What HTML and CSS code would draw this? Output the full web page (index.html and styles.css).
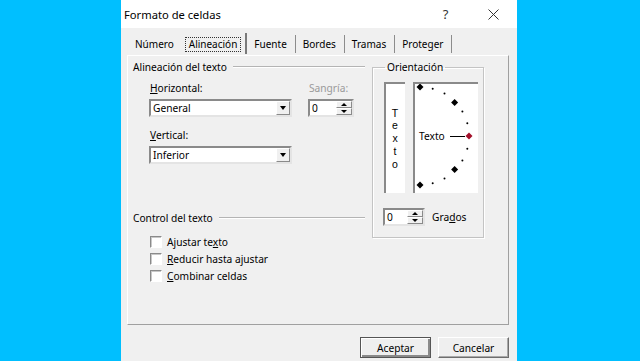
FILE: index.html
```html
<!DOCTYPE html>
<html lang="es">
<head>
  <meta charset="UTF-8" />
  <title>Formato de celdas</title>
  <link rel="stylesheet" href="styles.css">
</head>
<body>
  <div class="dialog">
    <div class="titlebar">
      <span class="title">Formato de celdas</span>
      <span class="cap-btn">?</span>
      <span class="cap-btn">
        <svg width="11" height="11" viewBox="0 0 11 11"><path d="M0.5 0.5 L10.5 10.5 M10.5 0.5 L0.5 10.5" stroke="#333" stroke-width="1" fill="none"/></svg>
      </span>
    </div>

    <div class="tabs">
      <span class="tab first">Número</span>
      <span class="tab active"><span class="focus">Alineación</span></span>
      <span class="tab">Fuente</span>
      <span class="tab">Bordes</span>
      <span class="tab">Tramas</span>
      <span class="tab">Proteger</span>
    </div>

    <div class="panel">
      <div class="col-left">
        <div class="group-head"><span>Alineación del texto</span><i class="rule"></i></div>

        <div class="field-row">
          <div class="field">
            <label><u>H</u>orizontal:</label>
            <div class="combo">General<span class="drop"></span></div>
          </div>
          <div class="field">
            <label class="disabled">Sangría:</label>
            <div class="spin">0<span class="spin-btns"><b class="up"></b><b class="down"></b></span></div>
          </div>
        </div>

        <div class="field vertical">
          <label><u>V</u>ertical:</label>
          <div class="combo">Inferior<span class="drop"></span></div>
        </div>

        <div class="group-head control"><span>Control del texto</span><i class="rule"></i></div>

        <div class="checks">
          <div class="check"><span class="box"></span><span>Ajustar te<u>x</u>to</span></div>
          <div class="check"><span class="box"></span><span><u>R</u>educir hasta ajustar</span></div>
          <div class="check"><span class="box"></span><span><u>C</u>ombinar celdas</span></div>
        </div>
      </div>

      <fieldset class="orient">
        <legend>Orientación</legend>
        <div class="orient-boxes">
          <div class="vtext">
            <span>T</span><span>e</span><span>x</span><span>t</span><span>o</span>
          </div>
          <div class="dial">
            <svg width="62" height="108" viewBox="0 0 62 108">
              <g fill="#000">
                <polygon points="5,-0.5 8.5,3 5,6.5 1.5,3"/>
                <polygon points="39.6,14.9 43.1,18.4 39.6,21.9 36.1,18.4"/>
                <polygon points="39.6,82.1 43.1,85.6 39.6,89.1 36.1,85.6"/>
                <polygon points="5,97.5 8.5,101 5,104.5 1.5,101"/>
                <circle cx="17.7" cy="4.7" r="1"/>
                <circle cx="29.5" cy="9.6" r="1"/>
                <circle cx="47.4" cy="27.5" r="1"/>
                <circle cx="52.3" cy="39.3" r="1"/>
                <circle cx="52.3" cy="64.7" r="1"/>
                <circle cx="47.4" cy="76.5" r="1"/>
                <circle cx="29.5" cy="94.4" r="1"/>
                <circle cx="17.7" cy="99.3" r="1"/>
              </g>
              <text x="4" y="56" font-family="Noto Sans, Liberation Sans, sans-serif" font-size="10.2" fill="#000">Texto</text>
              <line x1="35" y1="52.5" x2="50" y2="52.5" stroke="#000" stroke-width="1"/>
              <polygon points="54,48.5 57.5,52 54,55.5 50.5,52" fill="#a3102a"/>
            </svg>
          </div>
        </div>
        <div class="degrees">
          <div class="spin small">0<span class="spin-btns"><b class="up"></b><b class="down"></b></span></div>
          <span>Gra<u>d</u>os</span>
        </div>
      </fieldset>
    </div>

    <div class="footer">
      <button class="btn default">Aceptar</button>
      <button class="btn">Cancelar</button>
    </div>
  </div>
</body>
</html>
```

FILE: styles.css
```css
* {
  box-sizing: border-box;
}
body {
  margin: 0;
  height: 361px;
  overflow: hidden;
  background: #00bfff;
  font-family: "Noto Sans", "Liberation Sans", sans-serif;
  font-size: 10.2px;
  color: #000;
}
u {
  text-decoration-thickness: 1px;
  text-underline-offset: 1px;
}

.dialog {
  margin-left: 121px;
  width: 396px;
  height: 361px;
  background: #f0f0f0;
  display: flex;
  flex-direction: column;
}

/* title bar */
.titlebar {
  height: 28px;
  background: #fff;
  display: flex;
  align-items: center;
  padding-left: 3px;
  font-size: 11.2px;
}
.title {
  flex: 1;
}
.cap-btn {
  width: 46px;
  height: 28px;
  display: flex;
  align-items: center;
  justify-content: center;
  color: #333;
  font-size: 13px;
}
.cap-btn:nth-child(2) {
  padding-right: 3px;
}
.cap-btn:last-child {
  margin-right: 1px;
}

/* tabs */
.tabs {
  display: flex;
  height: 21px;
  margin: 5px 0 0 6px;
  font-size: 10px;
}
.tab {
  display: flex;
  align-items: center;
  padding: 0 8px 0 7px;
  border-right: 1px solid #8c8c8c;
  margin: 2px 0 1px;
}
.tab.first {
  padding: 0 7px 0 8px;
  border-right: none;
}
.tab.active {
  padding: 0 4px;
  margin: 0;
  border-right: 2px solid #7a7a7a;
}
.focus {
  border: 1px dotted #333;
  padding: 0 3px;
  line-height: 13px;
  margin-top: 1px;
}

/* panel */
.panel {
  margin: 1px 0 0 6px;
  width: 382px;
  height: 270px;
  border: 1px solid;
  border-color: #fff #a0a0a0 #a0a0a0 #fff;
  padding: 5px 0 0 5px;
  display: flex;
  gap: 7px;
}
.col-left {
  width: 232px;
  display: flex;
  flex-direction: column;
}
.group-head {
  display: flex;
  align-items: center;
  height: 12px;
  gap: 6px;
}
.rule {
  flex: 1;
  height: 2px;
  border-top: 1px solid #b4b4b4;
  border-bottom: 1px solid #fff;
}
.group-head.control {
  margin-top: 48px;
}

.field-row {
  display: flex;
  gap: 16px;
  margin-top: 9px;
  padding-left: 16px;
}
.field {
  display: flex;
  flex-direction: column;
  gap: 5px;
}
.field label {
  height: 12px;
  line-height: 12px;
  padding-left: 1px;
}
.field label.disabled {
  color: #9a9a9a;
}
.field.vertical {
  margin-top: 12px;
  padding-left: 16px;
}

.combo {
  width: 143px;
  height: 18px;
  background: #fff;
  border: 2px solid;
  border-color: #8a8a8a #e4e4e4 #e4e4e4 #8a8a8a;
  display: flex;
  align-items: center;
  padding-left: 2px;
  line-height: 14px;
}
.drop {
  margin-left: auto;
  width: 14px;
  height: 14px;
  background: #f0f0f0;
  border: 1px solid;
  border-color: #fff #8a8a8a #8a8a8a #fff;
  display: flex;
  align-items: center;
  justify-content: center;
}
.drop::after {
  content: "";
  border-left: 3px solid transparent;
  border-right: 3px solid transparent;
  border-top: 4px solid #000;
}

.spin {
  width: 46px;
  height: 18px;
  background: #fff;
  border: 2px solid;
  border-color: #8a8a8a #e4e4e4 #e4e4e4 #8a8a8a;
  display: flex;
  align-items: center;
  padding-left: 2px;
  line-height: 14px;
}
.spin.small {
  width: 42px;
}
.spin-btns {
  margin-left: auto;
  width: 16px;
  height: 14px;
  display: flex;
  flex-direction: column;
  background: #f0f0f0;
}
.spin-btns b {
  flex: 1;
  display: flex;
  align-items: center;
  justify-content: center;
  border: 1px solid;
  border-color: #fff #8a8a8a #8a8a8a #fff;
}
.spin-btns .up::after {
  content: "";
  border-left: 3px solid transparent;
  border-right: 3px solid transparent;
  border-bottom: 3px solid #000;
}
.spin-btns .down::after {
  content: "";
  border-left: 3px solid transparent;
  border-right: 3px solid transparent;
  border-top: 3px solid #000;
}

.checks {
  margin-top: 9px;
  padding-left: 17px;
  display: flex;
  flex-direction: column;
}
.check {
  height: 17px;
  display: flex;
  align-items: center;
  gap: 5px;
}
.box {
  width: 12px;
  height: 12px;
  background: #fff;
  border: 1px solid;
  border-color: #8a8a8a #fff #fff #8a8a8a;
  box-shadow: inset 1px 1px 0 #c8c8c8;
}

/* orientation group */
.orient {
  margin: 0;
  min-width: 0;
  width: 112px;
  height: 177px;
  border: 1px solid #c4c4c4;
  box-shadow: inset 1px 1px 0 #fff, 1px 1px 0 #fff;
  padding: 9px 0 0 10px;
}
.orient legend {
  padding: 0 2px;
  margin-left: 2px;
  height: 12px;
  line-height: 12px;
}
.orient-boxes {
  display: flex;
  gap: 8px;
  padding-left: 1px;
}
.vtext {
  width: 21px;
  height: 111px;
  background: #fff;
  border-left: 2px solid #8a8a8a;
  border-top: 2px solid #8a8a8a;
  display: flex;
  flex-direction: column;
  align-items: center;
  justify-content: center;
  font-family: "Liberation Sans", sans-serif;
  font-size: 10.5px;
  line-height: 12.7px;
  padding-right: 1px;
}
.dial {
  width: 65px;
  height: 111px;
  background: #fff;
  border-left: 2px solid #8a8a8a;
  border-top: 2px solid #8a8a8a;
}
.dial svg {
  display: block;
}
.degrees {
  margin-top: 15px;
  display: flex;
  align-items: center;
  gap: 7px;
}

/* buttons */
.footer {
  display: flex;
  justify-content: flex-end;
  gap: 7px;
  margin-top: 12px;
  padding-right: 8px;
}
.btn {
  width: 71px;
  height: 21px;
  font-family: inherit;
  font-size: 10.2px;
  color: #000;
  background: #efefef;
  border: 1px solid;
  border-color: #fff #6e6e6e #6e6e6e #fff;
  box-shadow: inset -1px -1px 0 #a9a9a9;
  padding: 0;
}
.btn.default {
  border: 1px solid #555;
  box-shadow: inset 1px 1px 0 #fff, inset -2px -2px 0 #8a8a8a;
}
```
